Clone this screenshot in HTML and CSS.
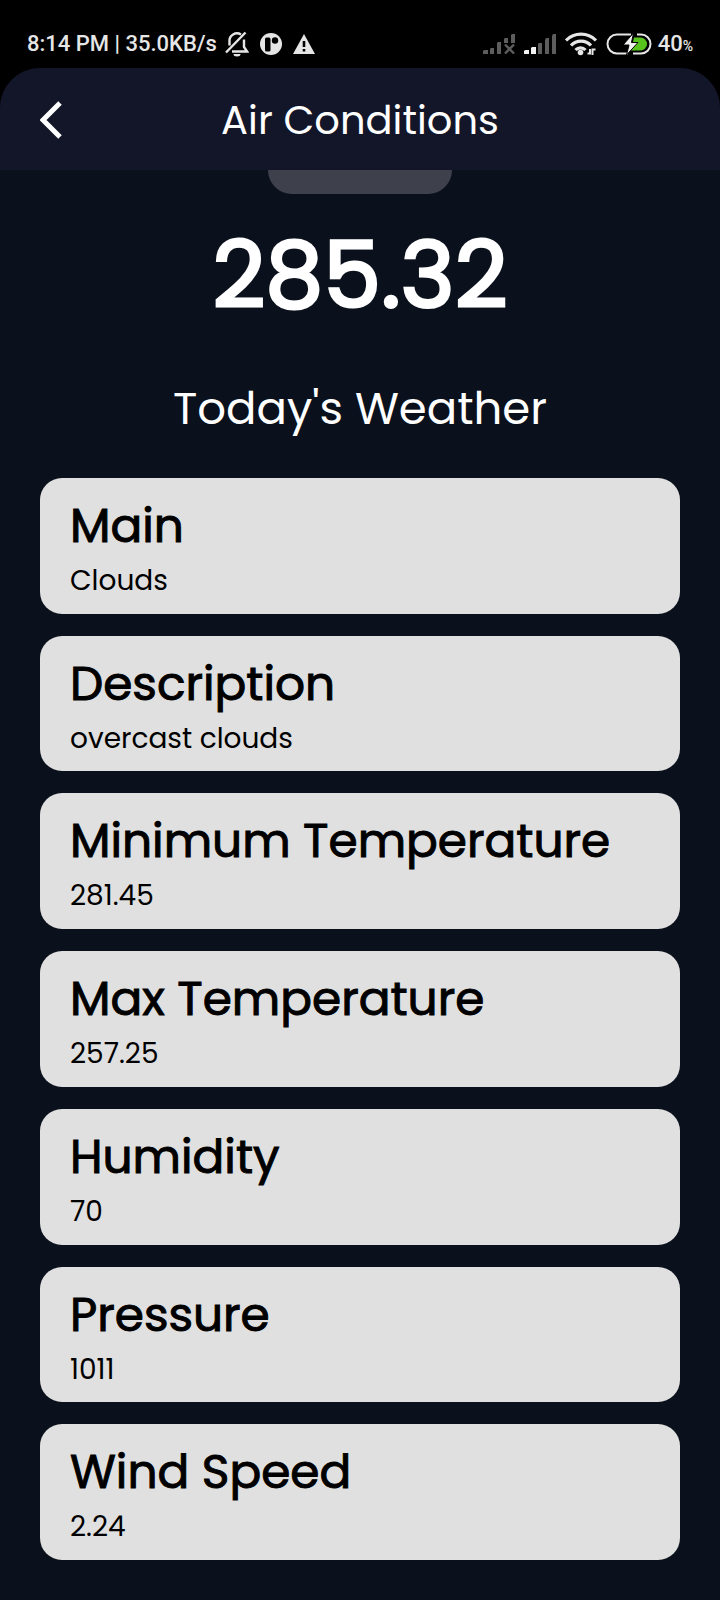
FILE: index.html
```html
<!DOCTYPE html>
<html lang="en">
<head>
<meta charset="utf-8">
<meta name="viewport" content="width=device-width, initial-scale=1">
<title>Air Conditions</title>
<link rel="stylesheet" href="styles.css">
</head>
<body>
<div class="status">
  <div class="status-left">
    <span>8:14 PM | 35.0KB/s</span>
    <div class="notices">
      <svg width="24" height="26" viewBox="0 0 24 26" fill="none" stroke="#e6e6e6" stroke-width="2.4">
        <path d="M4.500 14.500V10.500a7.500 7.500 0 0 1 11.500-7M19 8.500v7.500l3 4.500H7M1 21.500L20.500 1.500"/>
        <path d="M8.500 23h7a3.500 2.500 0 0 1-7 0z" fill="#e6e6e6" stroke="none"/>
      </svg>
      <svg width="22" height="22" viewBox="0 0 22 22">
        <circle cx="11" cy="11" r="11" fill="#e6e6e6"/>
        <rect x="5" y="4.500" width="5.500" height="14" rx="1.500"/>
        <circle cx="15" cy="7.500" r="3.200"/>
      </svg>
      <svg width="22" height="20" viewBox="0 0 22 20">
        <path d="M11 0L22 20H0z" fill="#e6e6e6"/>
        <path d="M9.700 7h2.600v6H9.700zM9.700 15h2.600v2.600H9.700z"/>
      </svg>
    </div>
  </div>
  <div class="status-right">
    <div class="signals">
      <svg width="32" height="20" viewBox="0 0 32 20" fill="#5d5d5d">
        <path d="M0 20v-3l1-1h4v4zM7 15l1-1h3v6H7zM14 9l1-1h3v12h-4zM21 5l1-1h3v5h-4zM28 1l1-1h3v9h-4z"/>
        <path d="M22 10.500l9 9M31 10.500l-9 9" stroke="#5d5d5d" stroke-width="2.400"/>
      </svg>
      <svg width="32" height="20" viewBox="0 0 32 20">
        <path d="M0 20v-3l1-1h4v4zM7 14l1-1h4v7H7z" fill="#f2f2f2"/>
        <path d="M14 10l1-1h3v11h-4zM21 6l1-2h3v16h-4zM28 2l1-2h3v20h-4z" fill="#5d5d5d"/>
      </svg>
      <svg width="32" height="24" viewBox="0 0 32 24" fill="none" stroke="#e6e6e6" stroke-width="3.2">
        <path d="M1 8.500a21 21 0 0 1 30 0M6 13.500a13.500 13.500 0 0 1 20 0M10.500 18a7 7 0 0 1 10 0"/>
        <circle cx="15.500" cy="20.500" r="2.800" fill="#e6e6e6" stroke="none"/>
        <path d="M22.500 21.500h2.500v-4.500M27.500 23v-5.500h3" stroke-width="2"/>
      </svg>
      <svg width="46" height="22" viewBox="0 0 46 22">
        <path d="M28 4.500h6.500a6.500 6.500 0 0 1 0 13H25z" fill="#58c31c"/>
        <path d="M25 1.500H11a9.500 9.500 0 0 0 0 19h11M31 1.500h4a9.500 9.500 0 0 1 0 19h-8" fill="none" stroke="#e6e6e6" stroke-width="2"/>
        <path d="M27.500 0L17 12h6l-2.500 10L32 9.500h-6.500z" fill="#f2f2f2" stroke="#000" stroke-width="1"/>
      </svg>
    </div>
    <span>40<small class="unit">%</small></span>
  </div>
</div>
<div class="app">
  <header class="bar">
    <button class="back" type="button" aria-label="Back">
      <svg width="22" height="38" viewBox="0 0 22 38" fill="none" stroke="#fff" stroke-width="5"><path d="M20 2L3 19l17 17"/></svg>
    </button>
    <h1 class="title">Air Conditions</h1>
  </header>
  <main class="content">
    <div class="handle"></div>
    <p class="reading">285.32</p>
    <h2 class="subtitle">Today's Weather</h2>
    <dl class="cards">
      <div class="card"><dt>Main</dt><dd>Clouds</dd></div>
      <div class="card"><dt>Description</dt><dd>overcast clouds</dd></div>
      <div class="card"><dt>Minimum Temperature</dt><dd>281.45</dd></div>
      <div class="card"><dt>Max Temperature</dt><dd>257.25</dd></div>
      <div class="card"><dt>Humidity</dt><dd>70</dd></div>
      <div class="card"><dt>Pressure</dt><dd>1011</dd></div>
      <div class="card"><dt>Wind Speed</dt><dd>2.24</dd></div>
    </dl>
  </main>
</div>
</body>
</html>
```
FILE: styles.css
```css
* { box-sizing: border-box; margin: 0; padding: 0; }

body {
  display: flex;
  flex-direction: column;
  min-height: 100vh;
  background: #000;
  color: #fff;
  font-family: Poppins, Inter, sans-serif;
}

svg { display: block; flex: none; }

.status {
  display: flex;
  justify-content: space-between;
  padding: 29px 27px 9px;
  color: #e6e6e6;
  font: 500 22px/30px Roboto, sans-serif;
}

.status-left,
.status-right,
.signals,
.notices { display: flex; align-items: center; }

.status-left { gap: 8px; }
.notices { gap: 11px; }
.status-right { gap: 6px; }
.signals { gap: 9px; }
.unit { font-size: 14px; line-height: 1; }

.app {
  flex: 1;
  display: flex;
  flex-direction: column;
  overflow: hidden;
  border-radius: 40px 40px 0 0;
  background: #0b111c;
}

.bar {
  display: grid;
  grid-template-columns: 1fr auto 1fr;
  align-items: center;
  padding: 26px 40px 24px;
  background: #131629;
}

.back {
  justify-self: start;
  border: 0;
  background: none;
}

.title { font-size: 40px; line-height: 52px; font-weight: 400; }

.content {
  flex: 1;
  display: flex;
  flex-direction: column;
  padding: 0 40px 40px;
}

.handle {
  align-self: center;
  width: 184px;
  height: 24px;
  border-radius: 0 0 24px 24px;
  background: #3e414b;
}

.reading {
  margin-top: 21px;
  text-align: center;
  font-size: 92px;
  line-height: 120px;
  -webkit-text-stroke: 3px #fff;
}

.subtitle {
  margin: 46px 0 41px;
  text-align: center;
  font-size: 45px;
  line-height: 56px;
  font-weight: 400;
}

.cards {
  flex: 1;
  display: grid;
  grid-auto-rows: 1fr;
  gap: 22px;
}

.card {
  padding: 20px 30px 2px;
  border-radius: 22px;
  background: #e0e0e0;
  color: #000;
}

.card dt { font-size: 47px; line-height: 56px; -webkit-text-stroke: 1px #000; }
.card dd { font-size: 28px; line-height: 54px; }
```
